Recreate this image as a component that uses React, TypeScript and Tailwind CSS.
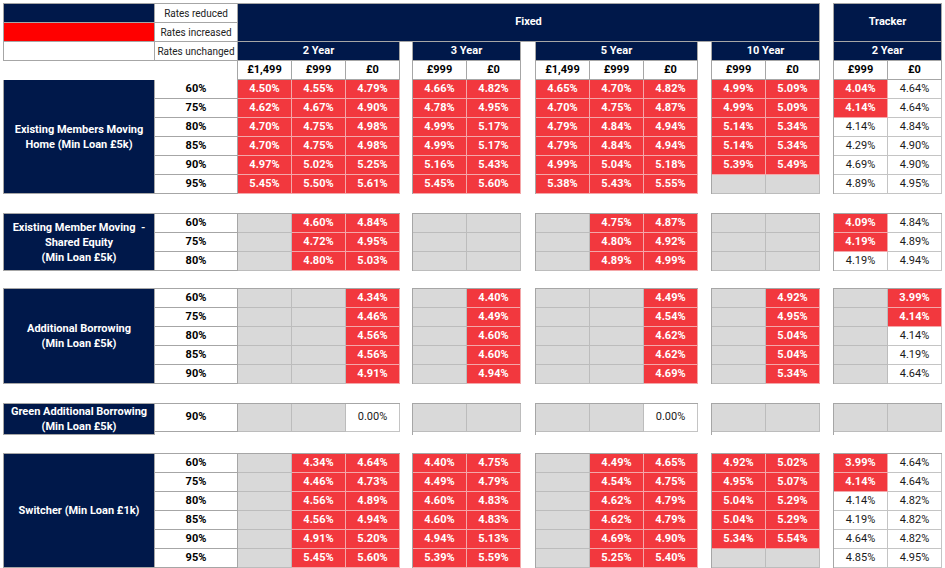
import React from "react";

// spreadsheet-ish rate grid
// cell tokens: "g" = not offered (grey), "r4.50" = rate increased (red), "w4.64" = unchanged (white)

type Block = string[]; // one string per row, tokens split by space

type Group = {
    label: React.ReactNode;
    ltv: string[];
    y2: Block;
    y3: Block;
    y5: Block;
    y10: Block;
    tr: Block;
    rowH?: string;
    mt?: string;
    top?: boolean;
};

const groups: Group[] = [
    {
        label: <>Existing Members Moving<br />Home (Min Loan £5k)</>,
        ltv: ["60%", "75%", "80%", "85%", "90%", "95%"],
        y2: ["r4.50 r4.55 r4.79", "r4.62 r4.67 r4.90", "r4.70 r4.75 r4.98", "r4.70 r4.75 r4.98", "r4.97 r5.02 r5.25", "r5.45 r5.50 r5.61"],
        y3: ["r4.66 r4.82", "r4.78 r4.95", "r4.99 r5.17", "r4.99 r5.17", "r5.16 r5.43", "r5.45 r5.60"],
        y5: ["r4.65 r4.70 r4.82", "r4.70 r4.75 r4.87", "r4.79 r4.84 r4.94", "r4.79 r4.84 r4.94", "r4.99 r5.04 r5.18", "r5.38 r5.43 r5.55"],
        y10: ["r4.99 r5.09", "r4.99 r5.09", "r5.14 r5.34", "r5.14 r5.34", "r5.39 r5.49", "g g"],
        tr: ["r4.04 w4.64", "r4.14 w4.64", "w4.14 w4.84", "w4.29 w4.90", "w4.69 w4.90", "w4.89 w4.95"],
        top: false,
    },
    {
        label: <>Existing Member Moving&nbsp; -<br />Shared Equity<br />(Min Loan £5k)</>,
        ltv: ["60%", "75%", "80%"],
        y2: ["g r4.60 r4.84", "g r4.72 r4.95", "g r4.80 r5.03"],
        y3: ["g g", "g g", "g g"],
        y5: ["g r4.75 r4.87", "g r4.80 r4.92", "g r4.89 r4.99"],
        y10: ["g g", "g g", "g g"],
        tr: ["r4.09 w4.84", "r4.19 w4.89", "w4.19 w4.94"],
        mt: "mt-[19px]",
        top: true,
    },
    {
        label: <>Additional Borrowing<br />(Min Loan £5k)</>,
        ltv: ["60%", "75%", "80%", "85%", "90%"],
        y2: ["g g r4.34", "g g r4.46", "g g r4.56", "g g r4.56", "g g r4.91"],
        y3: ["g r4.40", "g r4.49", "g r4.60", "g r4.60", "g r4.94"],
        y5: ["g g r4.49", "g g r4.54", "g g r4.62", "g g r4.62", "g g r4.69"],
        y10: ["g r4.92", "g r4.95", "g r5.04", "g r5.04", "g r5.34"],
        tr: ["g r3.99", "g r4.14", "g w4.14", "g w4.19", "g w4.64"],
        mt: "mt-[17px]",
        top: true,
    },
    {
        label: <>Green Additional Borrowing<br />(Min Loan £5k)</>,
        ltv: ["90%"],
        y2: ["g g w0.00"],
        y3: ["g g"],
        y5: ["g g w0.00"],
        y10: ["g g"],
        tr: ["g g"],
        rowH: "h-[28px]",
        mt: "mt-[19px]",
        top: true,
    },
    {
        label: <>Switcher (Min Loan £1k)</>,
        ltv: ["60%", "75%", "80%", "85%", "90%", "95%"],
        y2: ["g r4.34 r4.64", "g r4.46 r4.73", "g r4.56 r4.89", "g r4.56 r4.94", "g r4.91 r5.20", "g r5.45 r5.60"],
        y3: ["r4.40 r4.75", "r4.49 r4.79", "r4.60 r4.83", "r4.60 r4.83", "r4.94 r5.13", "r5.39 r5.59"],
        y5: ["g r4.49 r4.65", "g r4.54 r4.75", "g r4.62 r4.79", "g r4.62 r4.79", "g r4.69 r4.90", "g r5.25 r5.40"],
        y10: ["r4.92 r5.02", "r4.95 r5.07", "r5.04 r5.29", "r5.04 r5.29", "r5.34 r5.54", "g g"],
        tr: ["r3.99 w4.64", "r4.14 w4.64", "w4.14 w4.82", "w4.19 w4.82", "w4.64 w4.82", "w4.85 w4.95"],
        mt: "mt-[18px]",
        top: true,
    },
];

function Cell({ t, h }: { t: string; h: string }) {
    if (t === "g") {
        return <div className={`${h} w-[54px] bg-[#d9d9d9] border-r border-b border-[#bcbcbc]`} />;
    }
    const val = t.slice(1) + "%";
    if (t[0] === "r") {
        return (
            <div className={`${h} w-[54px] bg-[#f2383e] border-r border-b border-[#f4a7a9] flex items-center justify-center text-white font-bold`}>
                {val}
            </div>
        );
    }
    return (
        <div className={`${h} w-[54px] bg-white border-r border-b border-[#c4c4c4] flex items-center justify-center text-[#1a1a1a]`}>
            {val}
        </div>
    );
}

function Rows({ rows, h }: { rows: Block; h: string }) {
    return (
        <div className="flex flex-col">
            {rows.map((r, i) => (
                <div key={i} className="flex">
                    {r.split(" ").map((t, j) => (
                        <Cell key={j} t={t} h={h} />
                    ))}
                </div>
            ))}
        </div>
    );
}

function GroupRow({ g }: { g: Group }) {
    const h = g.rowH ?? "h-[19px]";
    const seg = g.top ? "flex border-l border-t border-[#a6a6a6]" : "flex border-l border-[#a6a6a6]";
    return (
        <div className={`flex ${g.mt ?? ""}`}>
            {/* label + LTV + 2 year */}
            <div className={seg}>
                <div className="w-[151px] bg-[#00184a] border-r border-b border-[#a6a6a6] flex items-center justify-center text-center text-white font-bold leading-[15px]">
                    <span>{g.label}</span>
                </div>
                <div className="flex flex-col">
                    {g.ltv.map((l) => (
                        <div key={l} className={`${h} w-[83px] bg-white border-r border-b border-[#a6a6a6] flex items-center justify-center font-bold text-black`}>
                            {l}
                        </div>
                    ))}
                </div>
                <Rows rows={g.y2} h={h} />
            </div>
            <div className={`${seg} ml-[12px]`}>
                <Rows rows={g.y3} h={h} />
            </div>
            <div className={`${seg} ml-[14px]`}>
                <Rows rows={g.y5} h={h} />
            </div>
            <div className={`${seg} ml-[13px]`}>
                <Rows rows={g.y10} h={h} />
            </div>
            <div className={`${seg} ml-[13px]`}>
                <Rows rows={g.tr} h={h} />
            </div>
        </div>
    );
}

function FeeCell({ children }: { children: React.ReactNode }) {
    return (
        <div className="h-[19px] w-[54px] bg-white border-r border-b border-[#a6a6a6] flex items-center justify-center font-bold text-black">
            {children}
        </div>
    );
}

function YearHead({ title, fees, left = true, w }: { title: string; fees: string[]; left?: boolean; w: string }) {
    return (
        <div className={`flex flex-col ${left ? "border-l border-[#a6a6a6]" : ""}`}>
            <div className={`h-[19px] ${w} bg-[#00184a] border-r border-b border-[#a6a6a6] flex items-center justify-center text-white font-bold`}>
                {title}
            </div>
            <div className="flex">
                {fees.map((f) => (
                    <FeeCell key={f}>{f}</FeeCell>
                ))}
            </div>
        </div>
    );
}

export default function App() {
    return (
        <div className="min-h-screen bg-white pt-[3px] pl-[3px] text-[11px] text-black" style={{ fontFamily: "Roboto, 'Liberation Sans', sans-serif" }}>
            {/* Header band */}
            <div className="flex">
                {/* Legend */}
                <div className="flex flex-col">
                    <div className="border-l border-t border-[#a6a6a6]">
                        {[
                            { c: "bg-[#00184a]", t: "Rates reduced" },
                            { c: "bg-[#ff0000]", t: "Rates increased" },
                            { c: "bg-white", t: "Rates unchanged" },
                        ].map((r) => (
                            <div key={r.t} className="flex">
                                <div className={`h-[19px] w-[151px] ${r.c} border-r border-b border-[#a6a6a6]`} />
                                <div className="h-[19px] w-[83px] border-r border-b border-[#a6a6a6] flex items-center justify-center text-[10px] text-[#222]">
                                    {r.t}
                                </div>
                            </div>
                        ))}
                    </div>
                    <div className="h-[19px] w-[235px] border-r border-[#a6a6a6]" />
                </div>

                {/* Fixed */}
                <div className="flex flex-col">
                    <div className="h-[39px] w-[582px] bg-[#00184a] border-t border-r border-b border-[#a6a6a6] flex items-center justify-center text-white font-bold">
                        Fixed
                    </div>
                    <div className="flex">
                        <YearHead title="2 Year" fees={["£1,499", "£999", "£0"]} left={false} w="w-[162px]" />
                        <div className="ml-[12px]">
                            <YearHead title="3 Year" fees={["£999", "£0"]} w="w-[108px]" />
                        </div>
                        <div className="ml-[14px]">
                            <YearHead title="5 Year" fees={["£1,499", "£999", "£0"]} w="w-[162px]" />
                        </div>
                        <div className="ml-[13px]">
                            <YearHead title="10 Year" fees={["£999", "£0"]} w="w-[108px]" />
                        </div>
                    </div>
                </div>

                {/* Tracker */}
                <div className="ml-[13px] flex flex-col border-l border-t border-[#a6a6a6]">
                    <div className="h-[38px] w-[108px] bg-[#00184a] border-r border-b border-[#a6a6a6] flex items-center justify-center text-white font-bold">
                        Tracker
                    </div>
                    <div className="h-[19px] w-[108px] bg-[#00184a] border-r border-b border-[#a6a6a6] flex items-center justify-center text-white font-bold">
                        2 Year
                    </div>
                    <div className="flex">
                        <FeeCell>£999</FeeCell>
                        <FeeCell>£0</FeeCell>
                    </div>
                </div>
            </div>

            {/* Product groups */}
            {groups.map((g, i) => (
                <GroupRow key={i} g={g} />
            ))}
        </div>
    );
}
